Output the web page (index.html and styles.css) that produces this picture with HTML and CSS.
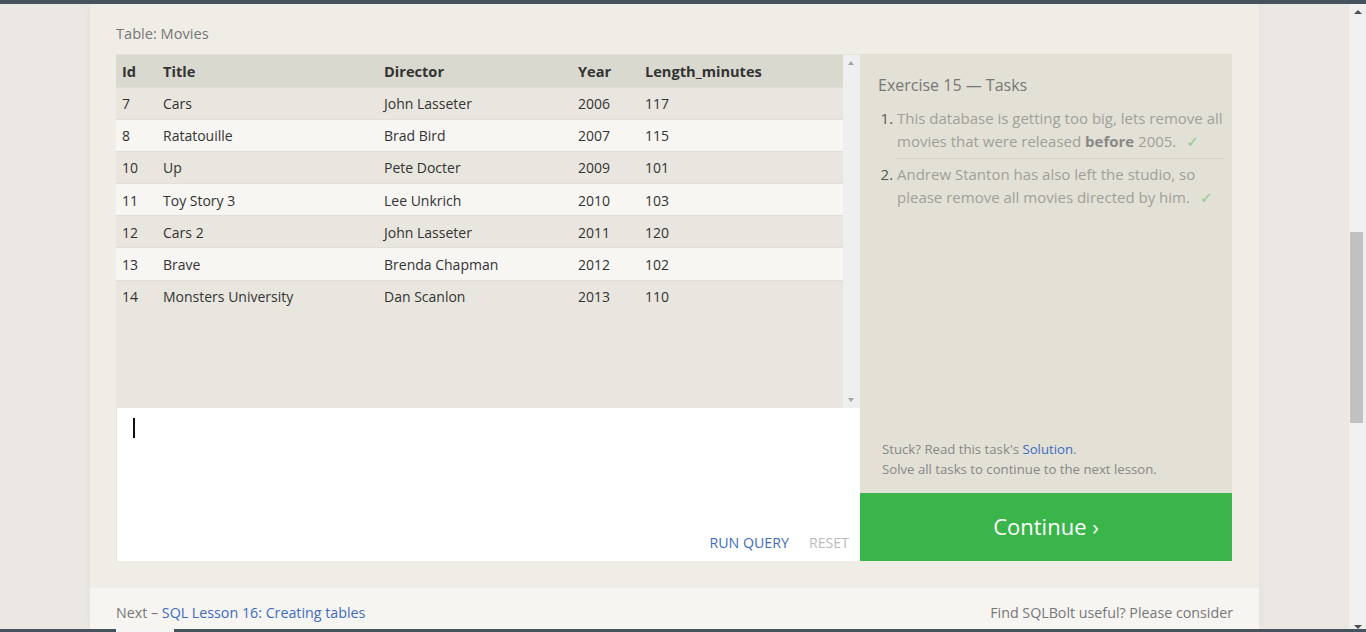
FILE: index.html
```html
<!DOCTYPE html>
<html>
<head>
<meta charset="utf-8">
<link rel="stylesheet" href="styles.css">
</head>
<body>
<div class="topbar"></div>
<div class="viewport">
  <div class="page">
    <div class="card">
      <div class="lesson">
        <div class="table-caption">Table: Movies</div>
        <div class="workspace">
          <div class="left">
            <div class="results">
              <div class="results-table">
                <table>
                  <thead>
                    <tr><th class="c-id">Id</th><th class="c-title">Title</th><th class="c-dir">Director</th><th class="c-year">Year</th><th>Length_minutes</th></tr>
                  </thead>
                  <tbody>
                    <tr><td>7</td><td>Cars</td><td>John Lasseter</td><td>2006</td><td>117</td></tr>
                    <tr><td>8</td><td>Ratatouille</td><td>Brad Bird</td><td>2007</td><td>115</td></tr>
                    <tr><td>10</td><td>Up</td><td>Pete Docter</td><td>2009</td><td>101</td></tr>
                    <tr><td>11</td><td>Toy Story 3</td><td>Lee Unkrich</td><td>2010</td><td>103</td></tr>
                    <tr><td>12</td><td>Cars 2</td><td>John Lasseter</td><td>2011</td><td>120</td></tr>
                    <tr><td>13</td><td>Brave</td><td>Brenda Chapman</td><td>2012</td><td>102</td></tr>
                    <tr><td>14</td><td>Monsters University</td><td>Dan Scanlon</td><td>2013</td><td>110</td></tr>
                  </tbody>
                </table>
              </div>
              <div class="mini-scroll">
                <span class="arrow-up"></span>
                <span class="arrow-down"></span>
              </div>
            </div>
            <div class="editor">
              <div class="caret"></div>
              <div class="editor-actions">
                <span class="run">RUN QUERY</span>
                <span class="reset">RESET</span>
              </div>
            </div>
          </div>
          <div class="right">
            <div class="tasks">
              <div class="tasks-title">Exercise 15 — Tasks</div>
              <ol class="task-list">
                <li class="task first">This database is getting too big, lets remove all movies that were released <b>before</b> 2005.<span class="check">✓</span></li>
                <li class="task">Andrew Stanton has also left the studio, so please remove all movies directed by him.<span class="check">✓</span></li>
              </ol>
              <div class="stuck">
                <div>Stuck? Read this task's <span class="link">Solution</span>.</div>
                <div>Solve all tasks to continue to the next lesson.</div>
              </div>
            </div>
            <div class="continue">Continue ›</div>
          </div>
        </div>
      </div>
      <div class="footer">
        <div class="next">Next – <span class="link">SQL Lesson 16: Creating tables</span></div>
        <div class="support">Find SQLBolt useful? Please consider</div>
      </div>
    </div>
  </div>
  <div class="page-scroll">
    <span class="ps-up"></span>
    <span class="ps-thumb"></span>
    <span class="ps-down"></span>
  </div>
</div>
<div class="bottombar"><span class="tab"></span></div>
</body>
</html>
```

FILE: styles.css
```css
* { box-sizing: border-box; }
html, body { margin: 0; padding: 0; }
body {
  background: #ebe7e3;
  font-family: "Open Sans", "Noto Sans", sans-serif;
  color: #333;
  height: 632px;
  overflow: hidden;
}
.topbar { height: 4px; background: #46535f; }
.bottombar {
  height: 3px;
  background: #46535f;
  position: relative;
}
.bottombar .tab {
  position: absolute;
  left: 116px;
  top: 0;
  width: 58px;
  height: 3px;
  background: #f4f4f4;
}
.viewport {
  display: flex;
  height: 625px;
}
.page {
  flex: 1;
  display: flex;
  justify-content: center;
  overflow: hidden;
}
.card {
  width: 1169px;
  background: #f0ede6;
  display: flex;
  flex-direction: column;
  box-shadow: 0 0 8px rgba(0,0,0,0.04);
}
.lesson {
  padding: 0 27px 0 26px;
  height: 584px;
}
.table-caption {
  font-size: 14.6px;
  color: #777;
  height: 50px;
  padding-top: 19px;
  line-height: 20px;
}
.workspace {
  display: flex;
  height: 507px;
}
.left {
  width: 744px;
  display: flex;
  flex-direction: column;
}
.results {
  display: flex;
  height: 354px;
  background: #e8e6df;
  border-top: 1px solid #e4e2da;
}
.results-table { flex: 1; }
table {
  width: 100%;
  border-collapse: collapse;
  font-size: 14px;
}
th {
  text-align: left;
  font-weight: 700;
  background: #dad9cf;
  height: 32px;
  padding: 0 6px 0;
  color: #333;
  font-size: 14.6px;
}
td {
  height: 32.2px;
  padding: 1px 6px 0;
  color: #333;
  border-top: 1px solid #e0ded6;
}
tbody tr:nth-child(odd) td { background: #e8e6df; }
tbody tr:nth-child(even) td { background: #f7f6f3; }
.c-id { width: 41px; }
.c-title { width: 221px; }
.c-dir { width: 194px; }
.c-year { width: 67px; }
.mini-scroll {
  width: 17px;
  background: #f0eff0;
  position: relative;
}
.arrow-up, .arrow-down {
  position: absolute;
  left: 5px;
  width: 0; height: 0;
  border-left: 3.5px solid transparent;
  border-right: 3.5px solid transparent;
}
.arrow-up { top: 6px; border-bottom: 4px solid #a3a3a3; }
.arrow-down { bottom: 6px; border-top: 4px solid #a3a3a3; }
.editor {
  height: 153px;
  background: #fff;
  position: relative;
  display: flex;
  flex-direction: column;
  justify-content: space-between;
  border-left: 1px solid #e6e4de;
}
.caret {
  margin: 10px 0 0 16px;
  width: 2px;
  height: 20px;
  background: #111;
}
.editor-actions {
  display: flex;
  justify-content: flex-end;
  gap: 20px;
  padding: 0 11px 8px 0;
  font-size: 14.2px;
  line-height: 20px;
}
.run { color: #3d6cc0; }
.reset { color: #bbb; }
.right {
  width: 372px;
  display: flex;
  flex-direction: column;
}
.tasks {
  flex: 1;
  background: #e3e0d6;
  padding: 20px 8px 14px 18px;
  display: flex;
  flex-direction: column;
}
.tasks-title {
  font-size: 16px;
  color: #777;
  line-height: 22px;
}
.task-list {
  margin: 11px 0 0 0;
  padding-left: 19px;
  font-size: 15px;
  line-height: 23px;
  color: #a0a09a;
}
.task-list li::marker { color: #555; }
.task.first { border-bottom: 1px solid #d6d3ca; padding-bottom: 4px; margin-bottom: 4px; }
.task b { color: #888; }
.check {
  color: #8ccc8e;
  margin-left: 10px;
  font-family: "DejaVu Sans", sans-serif;
  font-size: 15px;
}
.stuck {
  margin-top: auto;
  font-size: 13.2px;
  line-height: 20px;
  color: #888;
  padding-left: 4px;
}
.link { color: #3d6cc0; }
.continue {
  height: 68px;
  background: #3ab54a;
  color: #fff;
  font-size: 22px;
  display: flex;
  align-items: center;
  justify-content: center;
  padding-bottom: 2px;
}
.footer {
  flex: 1;
  background: #f6f5f2;
  display: flex;
  justify-content: space-between;
  padding: 15px 26px 0 26px;
  font-size: 14.25px;
  color: #777;
}
.footer .support { color: #777; }
.page-scroll {
  width: 17px;
  background: #f0f0f0;
  position: relative;
}
.ps-up, .ps-down {
  position: absolute;
  left: 5px;
  width: 0; height: 0;
  border-left: 4px solid transparent;
  border-right: 4px solid transparent;
}
.ps-up { top: 6px; border-bottom: 4px solid #505050; }
.ps-down { bottom: 0px; border-top: 4px solid #505050; }
.ps-thumb {
  position: absolute;
  left: 1px;
  width: 13px;
  top: 228px;
  height: 191px;
  background: #c1c1c1;
}
```
